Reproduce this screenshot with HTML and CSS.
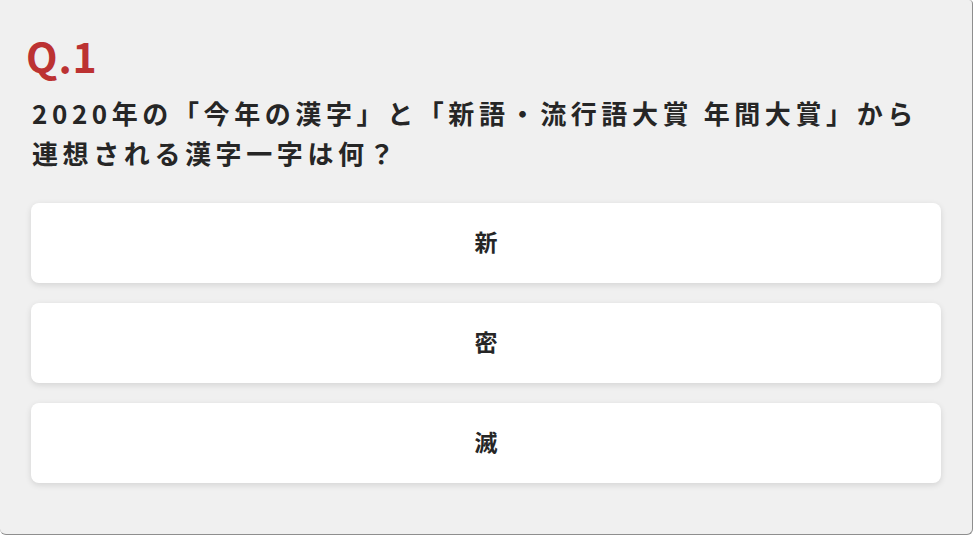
FILE: index.html
```html
<!DOCTYPE html>
<html lang="ja">
<head>
<meta charset="utf-8">
<link rel="stylesheet" href="styles.css">
</head>
<body>
<div class="quiz">
  <div class="q-num">Q.1</div>
  <p class="q-text">2020年の「今年の漢字」と「新語・流行語大賞 年間大賞」から<br>連想される漢字一字は何？</p>
  <div class="choices">
    <div class="choice">新</div>
    <div class="choice">密</div>
    <div class="choice">滅</div>
  </div>
</div>
</body>
</html>
```
FILE: styles.css
```css
html, body {
  margin: 0;
  padding: 0;
  background: #ffffff;
}
body {
  font-family: "Noto Sans CJK JP", "Noto Sans", sans-serif;
  color: #262626;
}
.quiz {
  box-sizing: border-box;
  width: 973px;
  height: 535px;
  background: #f0f0f0;
  border-right: 1px solid #8e8e8e;
  border-bottom: 1px solid #8e8e8e;
  border-radius: 0 4px 6px 6px;
  padding: 26px 31px 0 31px;
}
.q-num {
  font-size: 41px;
  font-weight: 700;
  line-height: 58px;
  color: #bc3232;
  margin-left: -5px;
  letter-spacing: 0.02em;
}
.q-text {
  margin: 9px 0 0 1px;
  font-size: 26px;
  font-weight: 700;
  line-height: 40px;
  letter-spacing: 4.6px;
  white-space: nowrap;
}
.choices {
  margin-top: 30px;
  display: flex;
  flex-direction: column;
  gap: 20px;
}
.choice {
  box-sizing: border-box;
  height: 80px;
  padding-bottom: 4px;
  background: #ffffff;
  border-radius: 8px;
  box-shadow: 0 2px 6px rgba(0, 0, 0, 0.12);
  display: flex;
  align-items: center;
  justify-content: center;
  font-size: 23px;
  font-weight: 700;
  color: #262626;
}
```
